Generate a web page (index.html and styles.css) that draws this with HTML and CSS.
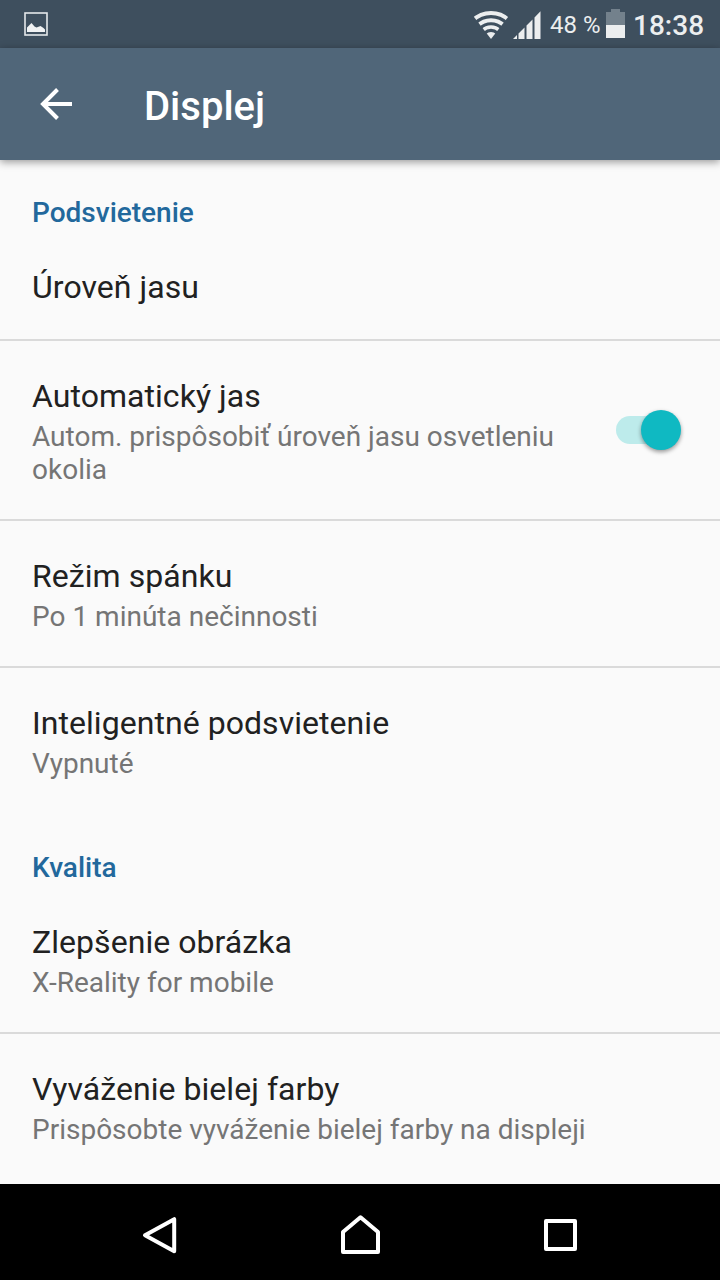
FILE: index.html
```html
<!DOCTYPE html>
<html lang="sk">
<head>
<meta charset="utf-8">
<title>Displej</title>
<link rel="stylesheet" href="styles.css">
</head>
<body>
<div class="screen">
  <header class="status">
    <svg class="picture" width="24" height="24" viewBox="0 0 24 24"><rect x="1" y="1" width="22" height="22" fill="none" stroke="#e4e8ea" stroke-width="1.600"/><path d="M3 20v-4.500L5.500 13l2-2 3 3.500 2 1 4-1.500 3 2 1.500 1.500V20z" fill="#f0f2f3"/></svg>
    <svg class="wifi" width="34" height="29" viewBox="0 0 34 29"><clipPath id="fan"><path d="M17 29L-3.100 3V-2h40.200v5z"/></clipPath><g clip-path="url(#fan)" fill="none" stroke="#eceeef" stroke-width="4"><circle cx="17" cy="29" r="26"/><circle cx="17" cy="29" r="18.800"/><circle cx="17" cy="29" r="12" stroke-width="3.600"/><circle cx="17" cy="29" r="3.500" stroke-width="7"/></g></svg>
    <svg class="signal" width="28" height="28" viewBox="0 0 28 28" fill="#eceeef"><path d="M0 28l4-4v4zM5.500 28v-5.500l6-6V28zM13.500 28V14.500l6-6V28zM21.500 28V6.500L27.500 .3V28z"/></svg>
    <span class="percent">48 %</span>
    <svg class="battery" width="19" height="29" viewBox="0 0 19 29"><path d="M0 3h5V0h9v3h5v13H0z" fill="#73818c"/><path d="M0 16h19v13H0z" fill="#eceeef"/></svg>
    <span class="clock">18:38</span>
  </header>
  <div class="toolbar">
    <svg class="back" width="32" height="32" viewBox="0 0 32 32"><path d="M32 16H3M17.500 1.500L3 16l14.500 14.500" fill="none" stroke="#fff" stroke-width="4"/></svg>
    <h1>Displej</h1>
  </div>
  <main class="settings">
    <section>
      <h2>Podsvietenie</h2>
      <div class="row"><div class="title">Úroveň jasu</div></div>
      <div class="row split">
        <div class="text">
          <div class="title">Automatický jas</div>
          <div class="summary">Autom. prispôsobiť úroveň jasu osvetleniu okolia</div>
        </div>
        <div class="switch"><div class="thumb"></div></div>
      </div>
      <div class="row">
        <div class="title">Režim spánku</div>
        <div class="summary">Po 1 minúta nečinnosti</div>
      </div>
      <div class="row last">
        <div class="title">Inteligentné podsvietenie</div>
        <div class="summary">Vypnuté</div>
      </div>
    </section>
    <section>
      <h2>Kvalita</h2>
      <div class="row">
        <div class="title">Zlepšenie obrázka</div>
        <div class="summary">X-Reality for mobile</div>
      </div>
      <div class="row last">
        <div class="title">Vyváženie bielej farby</div>
        <div class="summary">Prispôsobte vyváženie bielej farby na displeji</div>
      </div>
    </section>
  </main>
  <nav class="navbar">
    <svg width="40" height="40" viewBox="0 0 40 40"><path d="M34.200 3.200v32L5 19.200z"/></svg>
    <svg width="40" height="40" viewBox="0 0 40 40"><path d="M3 36V16L20.500 1.200 38 16v20z"/></svg>
    <svg width="40" height="40" viewBox="0 0 40 40"><path d="M6 5h29v28H6z"/></svg>
  </nav>
</div>
</body>
</html>
```
FILE: styles.css
```css
* {
  box-sizing: border-box;
}

body {
  margin: 0;
  font-family: Roboto, sans-serif;
}

svg {
  display: block;
  flex: none;
  overflow: visible;
}

.screen {
  display: flex;
  flex-direction: column;
  width: 720px;
  height: 1280px;
  overflow: hidden;
  background: #fafafa;
}

.status {
  display: flex;
  flex: none;
  align-items: flex-start;
  height: 48px;
  background: #3e4f5e;
  color: #eceeef;
  white-space: nowrap;
}

.picture {
  margin: 12px auto 0 24px;
}

.wifi {
  margin: 10px 5px 0 0;
}

.signal {
  margin-top: 11px;
}

.percent {
  width: 65px;
  padding-left: 9px;
  font-size: 24px;
  line-height: 28px;
  margin-top: 11px;
}

.battery {
  margin-top: 9px;
}

.clock {
  width: 95px;
  padding-left: 8px;
  margin-top: 9px;
  font-size: 28px;
  font-weight: 500;
  line-height: 33px;
}

.toolbar {
  position: relative;
  display: flex;
  flex: none;
  height: 112px;
  padding: 40px 40px 0;
  background: #506679;
  box-shadow: 0 2px 8px rgba(0, 0, 0, 0.4);
}

h1 {
  margin: -5px 0 0 72px;
  color: #fff;
  font-size: 40px;
  font-weight: 500;
  line-height: 47px;
}

.settings {
  flex: 1;
  min-height: 0;
  overflow: hidden;
}

h2 {
  margin: 0;
  padding: 36px 32px 3px;
  color: #22689c;
  font-size: 28px;
  font-weight: 500;
  line-height: 33px;
}

.row {
  padding: 36px 32px 33px;
  border-bottom: 2px solid #dadada;
}

.last {
  border-bottom-color: transparent;
}

.split {
  display: flex;
  align-items: center;
  justify-content: space-between;
}

.text {
  width: 550px;
}

.title {
  color: #212121;
  font-size: 32px;
  line-height: 38px;
  letter-spacing: 0.05px;
}

.summary {
  margin-top: 5px;
  color: #757575;
  font-size: 28px;
  line-height: 33px;
}

.switch {
  display: flex;
  align-items: center;
  justify-content: flex-end;
  width: 65px;
  height: 28px;
  margin: 0 7px 4px 0;
  border-radius: 14px;
  background: linear-gradient(90deg, #bdebeb 42px, transparent 42px);
}

.thumb {
  flex: none;
  width: 40px;
  height: 40px;
  border-radius: 50%;
  background: #0fb9c2;
  box-shadow: 0 2px 4px rgba(0, 0, 0, 0.4);
}

.navbar {
  display: flex;
  flex: none;
  gap: 160px;
  height: 96px;
  padding: 32px 0 0 140px;
  background: #000;
}

.navbar path {
  fill: none;
  stroke: #fff;
  stroke-width: 4;
  stroke-linejoin: round;
}
```
